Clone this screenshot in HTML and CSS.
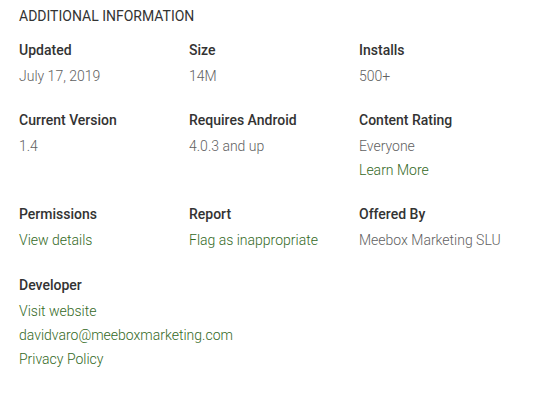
FILE: index.html
```html
<!DOCTYPE html>
<html>

<head>
	<title>Additional Information</title>
	<link rel="stylesheet" href="styles.css">
</head>

<body>
	<div class="info">
		<h2 class="info-title">Additional Information</h2>
		<div class="info-grid">
			<div class="cell">
				<div class="label">Updated</div>
				<div class="value">July 17, 2019</div>
			</div>
			<div class="cell">
				<div class="label">Size</div>
				<div class="value">14M</div>
			</div>
			<div class="cell">
				<div class="label">Installs</div>
				<div class="value">500+</div>
			</div>

			<div class="cell">
				<div class="label">Current Version</div>
				<div class="value">1.4</div>
			</div>
			<div class="cell">
				<div class="label">Requires Android</div>
				<div class="value">4.0.3 and up</div>
			</div>
			<div class="cell">
				<div class="label">Content Rating</div>
				<div class="value">Everyone</div>
				<a class="value link" href="#">Learn More</a>
			</div>

			<div class="cell">
				<div class="label">Permissions</div>
				<a class="value link" href="#">View details</a>
			</div>
			<div class="cell">
				<div class="label">Report</div>
				<a class="value link" href="#">Flag as inappropriate</a>
			</div>
			<div class="cell">
				<div class="label">Offered By</div>
				<div class="value">Meebox Marketing SLU</div>
			</div>

			<div class="cell developer">
				<div class="label">Developer</div>
				<a class="value link" href="#">Visit website</a>
				<a class="value link" href="#">davidvaro@meeboxmarketing.com</a>
				<a class="value link" href="#">Privacy Policy</a>
			</div>
		</div>
	</div>
</body>

</html>
```

FILE: styles.css
```css
body {
	margin: 0;
	background-color: #fff;
	font-family: Roboto, "Liberation Sans", sans-serif;
	font-size: 14px;
}

.info {
	padding: 4px 19px 0;
}

.info-title {
	margin: 0 0 10px;
	font-size: 14px;
	font-weight: 400;
	line-height: 24px;
	text-transform: uppercase;
	color: #333;
}

.info-grid {
	display: grid;
	grid-template-columns: repeat(3, 170px);
	row-gap: 20px;
}

.cell {
	display: flex;
	flex-direction: column;
	align-items: flex-start;
}

.developer {
	margin-top: 1px;
}

.label {
	font-weight: 500;
	line-height: 24px;
	margin-bottom: 2px;
	color: #333;
}

.value {
	font-weight: 300;
	line-height: 24px;
	color: #616161;
}

.link {
	color: #33691e;
	text-decoration: none;
}
```
